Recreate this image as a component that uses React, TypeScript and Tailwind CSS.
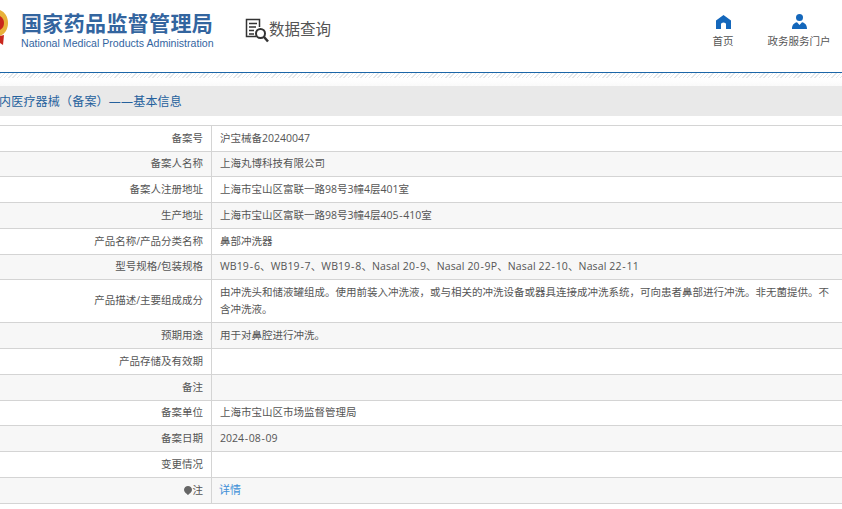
const rows: { label: string; value: string; h: string; link?: boolean; pin?: boolean; wide?: boolean }[] = [
  { label: "备案号", value: "沪宝械备20240047", h: "h-[26px]" },
  { label: "备案人名称", value: "上海丸博科技有限公司", h: "h-[25px]" },
  { label: "备案人注册地址", value: "上海市宝山区富联一路98号3幢4层401室", h: "h-[26px]" },
  { label: "生产地址", value: "上海市宝山区富联一路98号3幢4层405-410室", h: "h-[26px]" },
  { label: "产品名称/产品分类名称", value: "鼻部冲洗器", h: "h-[26px]" },
  { label: "型号规格/包装规格", value: "WB19-6、WB19-7、WB19-8、Nasal 20-9、Nasal 20-9P、Nasal 22-10、Nasal 22-11", h: "h-[25px]", wide: true },
  { label: "产品描述/主要组成成分", value: "由冲洗头和储液罐组成。使用前装入冲洗液，或与相关的冲洗设备或器具连接成冲洗系统，可向患者鼻部进行冲洗。非无菌提供。不含冲洗液。", h: "h-[43px]" },
  { label: "预期用途", value: "用于对鼻腔进行冲洗。", h: "h-[26px]" },
  { label: "产品存储及有效期", value: "", h: "h-[26px]" },
  { label: "备注", value: "", h: "h-[26px]" },
  { label: "备案单位", value: "上海市宝山区市场监督管理局", h: "h-[25px]" },
  { label: "备案日期", value: "2024-08-09", h: "h-[26px]" },
  { label: "变更情况", value: "", h: "h-[26px]" },
  { label: "注", value: "详情", h: "h-[26px]", link: true, pin: true },
];

function Value({ text }: { text: string }) {
  const parts = text.split("-");
  return (
    <>
      {parts.map((p, i) => (
        <span key={i}>
          {i > 0 && <span className="mx-[0.7px]">-</span>}
          {p}
        </span>
      ))}
    </>
  );
}

export default function App() {
  return (
    <div className="w-[842px] h-[509px] overflow-hidden bg-white text-[#555] text-[10.5px]" style={{ fontFamily: '"Open Sans", "Noto Sans CJK SC", sans-serif' }}>
      <header className="h-[72px] flex relative border-b border-[#1b66a8] box-content">
        <svg className="absolute left-0 top-[10px]" width="9" height="37" viewBox="0 0 9 37">
          <path d="M0 0C5 2 8 7 8 13C8 19 5 24 0 26Z" fill="#e8b13a" />
          <path d="M0 6C3 8 4 10 4 13C4 16 3 18 0 20Z" fill="#c9271d" />
          <path d="M0 26L4 25L3 35L0 33Z" fill="#c9271d" />
        </svg>
        <div className="ml-[21px] mt-[11px] w-[200px]" style={{ fontFamily: '"Liberation Sans", "Noto Sans CJK SC", sans-serif' }}>
          <div className="text-[21px] leading-[26px] font-bold text-[#33659f] tracking-[0.35px] whitespace-nowrap">国家药品监督管理局</div>
          <div className="text-[10.6px] leading-[14px] -mt-[1px] text-[#33659f] whitespace-nowrap">National Medical Products Administration</div>
        </div>
        <div className="ml-[24px] mt-[18px] flex items-start h-[28px]">
          <svg width="24" height="25" viewBox="0 0 24 25" fill="none" stroke="#333" strokeWidth="1.5">
            <path d="M11 18.5H1.5V1.5H14.5V9" />
            <path d="M4 5.5H12M4 9H11M4 12.5H9M4 16H9" />
            <circle cx="15.5" cy="15.5" r="4.5" strokeWidth="2" />
            <path d="M19 19L23 23.5" strokeWidth="2.5" />
          </svg>
          <span className="text-[15.5px] leading-[23px] text-[#555] whitespace-nowrap">数据查询</span>
        </div>
        <div className="ml-auto flex">
          <div className="w-[44px] mr-[16px] mt-[15px] flex flex-col items-center">
            <svg width="15" height="14" viewBox="0 0 15 14" fill="#1467bb">
              <path d="M7.5 0L15 5.5V14H10V9Q10 7.5 7.5 7.5Q5 7.5 5 9V14H0V5.5Z" />
            </svg>
            <span className="mt-[5px] leading-[14px] text-[#555]">首页</span>
          </div>
          <div className="w-[76px] mr-[5px] mt-[14px] flex flex-col items-center">
            <svg width="15" height="16" viewBox="0 0 15 16" fill="#1467bb">
              <circle cx="7.5" cy="3.6" r="3.5" />
              <path d="M0 15C0 11 2 9 5 8.3L7.5 11L10 8.3C13 9 15 11 15 15Z" />
            </svg>
            <span className="mt-[4px] leading-[14px] text-[#555] whitespace-nowrap">政务服务门户</span>
          </div>
        </div>
      </header>
      <div className="h-[5px] bg-[repeating-linear-gradient(135deg,#e3e7ea_0px,#e3e7ea_1px,#ffffff_1px,#ffffff_3px)]" />
      <div className="h-[8px] bg-gradient-to-b from-white to-[#fafafa]" />
      <div className="h-[30px] bg-[#e9e9e9] flex items-center pt-[1px] text-[12px] text-[#25619d] tracking-[0.2px] whitespace-nowrap">
        <span className="-ml-[1px]">内医疗器械（备案）——基本信息</span>
      </div>
      <table className="w-full mt-[9px] border-separate border-spacing-0 border-t border-[#d4d4d4] table-fixed">
        <tbody>
          {rows.map((r, i) => (
            <tr key={r.label} className={i % 2 === 1 ? "bg-[#f7f7f7]" : ""}>
              <td className={`${r.h} w-[212px] p-0 pr-[8px] text-right border-r border-b border-[#d4d4d4] whitespace-nowrap`}>
                {r.pin && (
                  <svg className="inline-block mr-[1px] align-[-1px]" width="8" height="9" viewBox="0 0 8 9" fill="#666">
                    <path d="M4 0C6 0 8 1.5 8 3.7C8 6 5 8 4 9C3 8 0 6 0 3.7C0 1.5 2 0 4 0Z" />
                  </svg>
                )}
                {r.label}
              </td>
              <td className={`pl-[8px] pr-[8px] py-0 leading-[17.5px] border-b border-[#d4d4d4] ${r.wide ? "tracking-[0.13px]" : ""}`}>
                {r.link ? <span className="text-[#3e8fd8] text-[11px] -ml-[1px]">{r.value}</span> : <Value text={r.value} />}
              </td>
            </tr>
          ))}
        </tbody>
      </table>
    </div>
  );
}
